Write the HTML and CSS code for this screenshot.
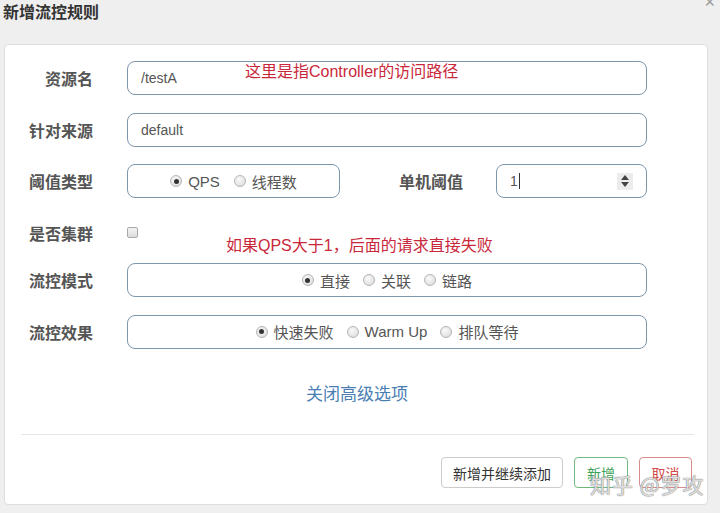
FILE: index.html
```html
<!DOCTYPE html>
<html lang="zh">
<head>
<meta charset="utf-8">
<title>新增流控规则</title>
<link rel="stylesheet" href="styles.css">
</head>
<body>
<div class="dialog">
  <header class="dialog-head">
    <h1 class="dialog-title">新增流控规则</h1>
    <span class="close">×</span>
  </header>
  <section class="panel">
    <div class="row">
      <label class="label">资源名</label>
      <div class="input">/testA</div>
    </div>
    <div class="row">
      <label class="label">针对来源</label>
      <div class="input">default</div>
    </div>
    <div class="row">
      <label class="label">阈值类型</label>
      <div class="radio-box small">
        <span class="opt"><span class="radio checked"></span>QPS</span>
        <span class="opt"><span class="radio"></span>线程数</span>
      </div>
      <label class="label sub">单机阈值</label>
      <div class="input number"><span class="val">1</span><span class="caret"></span><span class="spin"><i class="up"></i><i class="down"></i></span></div>
    </div>
    <div class="row check-row">
      <label class="label">是否集群</label>
      <span class="checkbox"></span>
    </div>
    <div class="row">
      <label class="label">流控模式</label>
      <div class="radio-box">
        <span class="opt"><span class="radio checked"></span>直接</span>
        <span class="opt"><span class="radio"></span>关联</span>
        <span class="opt"><span class="radio"></span>链路</span>
      </div>
    </div>
    <div class="row">
      <label class="label">流控效果</label>
      <div class="radio-box">
        <span class="opt"><span class="radio checked"></span>快速失败</span>
        <span class="opt"><span class="radio"></span>Warm Up</span>
        <span class="opt"><span class="radio"></span>排队等待</span>
      </div>
    </div>
    <div class="toggle"><a class="link">关闭高级选项</a></div>
    <hr class="divider">
    <div class="actions">
      <button class="btn">新增并继续添加</button>
      <button class="btn btn-ok">新增</button>
      <button class="btn btn-cancel">取消</button>
    </div>
    <span class="note note-1">这里是指Controller的访问路径</span>
    <span class="note note-2">如果QPS大于1，后面的请求直接失败</span>
    <span class="watermark">知乎 @罗攻</span>
  </section>
</div>
</body>
</html>
```

FILE: styles.css
```css
* { box-sizing: border-box; }
html, body { margin: 0; padding: 0; }
body {
  background: #efefef;
  font-family: "Liberation Sans", "Noto Sans CJK SC", sans-serif;
  color: #555;
  width: 720px;
  height: 513px;
  overflow: hidden;
}
.dialog { position: relative; }
.dialog-head {
  height: 44px;
  display: flex;
  justify-content: space-between;
  align-items: flex-start;
}
.dialog-title {
  margin: 0;
  padding-left: 3px;
  font-size: 16px;
  line-height: 22px;
  font-weight: bold;
  color: #333;
  font-family: "Noto Sans CJK SC", sans-serif;
}
.close {
  position: absolute;
  right: 5px;
  top: -7px;
  font-size: 18px;
  color: #999;
  line-height: 18px;
}
.panel {
  position: relative;
  margin-left: 4px;
  width: 704px;
  height: 461px;
  background: #fff;
  border: 1px solid #dedede;
  border-radius: 4px;
  padding: 16px 60px 16px 0;
  display: flex;
  flex-direction: column;
}
.row {
  display: flex;
  align-items: center;
  height: 34px;
  flex: none;
  margin-bottom: 17.5px;
}
.label {
  width: 88px;
  flex: none;
  text-align: right;
  margin-right: 34px;
  font-size: 16px;
  font-weight: bold;
  color: #555;
  font-family: "Noto Sans CJK SC", sans-serif;
}
.label.sub { width: auto; flex: 1; margin-right: 33px; }
.input {
  flex: 1;
  height: 34px;
  border: 1px solid #7d97ad;
  border-radius: 8px;
  padding: 0 13px;
  display: flex;
  align-items: center;
  font-size: 14px;
  color: #555;
}
.input.number { flex: none; width: 151px; position: relative; }
.val { font-size: 14px; }
.caret { width: 1px; height: 16px; background: #333; margin-left: 1px; }
.spin {
  margin-left: auto;
  width: 16px;
  height: 17px;
  background: #ececec;
  display: flex;
  flex-direction: column;
  align-items: center;
  justify-content: center;
  gap: 2px;
}
.spin i { display: block; width: 0; height: 0; border-left: 4px solid transparent; border-right: 4px solid transparent; }
.spin .up { border-bottom: 5px solid #444; }
.spin .down { border-top: 5px solid #444; }
.radio-box {
  flex: 1;
  height: 34px;
  border: 1px solid #7d97ad;
  border-radius: 8px;
  display: flex;
  align-items: center;
  justify-content: center;
  gap: 13px;
  font-size: 15px;
  color: #555;
  font-family: "Liberation Sans", "Noto Sans CJK SC", sans-serif;
}
.radio-box.small { flex: none; width: 213px; gap: 14px; }
.opt { display: flex; align-items: center; }
.radio {
  width: 12px;
  height: 12px;
  border-radius: 50%;
  border: 1px solid #b5b5b5;
  background: radial-gradient(circle at 40% 35%, #fafafa, #d8d8d8);
  margin-right: 6px;
  position: relative;
}
.radio.checked::after {
  content: "";
  position: absolute;
  left: 2.5px;
  top: 2.5px;
  width: 5px;
  height: 5px;
  border-radius: 50%;
  background: #333;
}
.check-row { margin-bottom: 13.5px; }
.checkbox {
  width: 11px;
  height: 11px;
  border: 1px solid #aaa;
  border-radius: 2px;
  background: linear-gradient(#f4f4f4, #dcdcdc);
}
.toggle {
  margin-top: 16px;
  text-align: center;
  padding-left: 62px;
  height: 22px;
  line-height: 22px;
  flex: none;
}
.link {
  color: #4b7fb3;
  font-size: 17px;
  font-family: "Noto Sans CJK SC", sans-serif;
}
.divider {
  margin: 30px 0 0 16px;
  width: 673px;
  border: 0;
  border-top: 1px solid #e5e5e5;
  height: 0;
  flex: none;
}
.actions {
  margin-top: 22px;
  display: flex;
  justify-content: flex-end;
  gap: 11px;
  margin-right: -45px;
  flex: none;
}
.btn {
  height: 31px;
  padding: 0 11px;
  border: 1px solid #ccc;
  border-radius: 4px;
  background: #fff;
  color: #333;
  font-size: 14px;
  font-family: "Noto Sans CJK SC", sans-serif;
}
.btn-ok { border-color: #6fb97e; color: #3ea356; width: 54px; padding: 0; }
.btn-cancel { border-color: #d98a8a; color: #d24a4a; width: 53px; padding: 0; }
.note {
  position: absolute;
  color: #c9283a;
  font-size: 16px;
  line-height: 20px;
  font-family: "Liberation Sans", "Noto Sans CJK SC", sans-serif;
}
.note-1 { left: 240px; top: 17px; }
.note-2 { left: 221px; top: 191px; }
.watermark {
  position: absolute;
  left: 585px;
  top: 424px;
  font-size: 21px;
  color: rgba(255,255,255,0.75);
  text-shadow: 0 0 1px #777, 0 0 1px #777;
  font-family: "Noto Sans CJK SC", sans-serif;
  letter-spacing: 1px;
}
```
